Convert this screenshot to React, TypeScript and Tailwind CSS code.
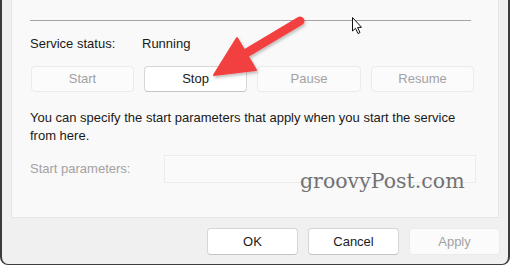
import React from "react";

const font = { fontFamily: '"Liberation Sans", Arial, sans-serif' };

const Btn = ({ label, disabled, w }: { label: string; disabled?: boolean; w: string }) => (
  <button
    className={
      disabled
        ? `${w} h-[26px] rounded-[4px] border border-[#ebebeb] bg-[#fbfbfb] text-[13px] text-[#a2a2a2]`
        : `${w} h-[26px] rounded-[4px] border border-[#d6d6d6] border-b-[#c4c4c4] bg-white text-[13px] text-[#1a1a1a]`
    }
  >
    {label}
  </button>
);

export default function App() {
  return (
    <div className="w-[510px] h-[267px] bg-white overflow-hidden relative" style={font}>
      <div className="h-[265px] bg-[#f0f0f0] border-l-2 border-r-2 border-b border-[#3c3c3c] rounded-b-[8px] flex flex-col px-[9px]">
        {/* tab page */}
        <div className="h-[218px] bg-[#f9f9f9] border-x border-b border-[#e6e6e6] pl-[18px] pr-[22px] flex flex-col">
          <div className="mt-[20px] mr-[5px] h-px bg-[#a3a3a3]" />
          <div className="mt-[15px] flex items-center h-[16px] text-[13px] text-[#1a1a1a]">
            <span className="w-[112px]">Service status:</span>
            <span>Running</span>
          </div>
          <div className="mt-[14px] flex gap-[10px] pl-[1px]">
            <Btn label="Start" disabled w="w-[103px]" />
            <Btn label="Stop" w="w-[103px]" />
            <Btn label="Pause" disabled w="w-[104px]" />
            <Btn label="Resume" disabled w="w-[103px]" />
          </div>
          <p className="mt-[17px] text-[13px] leading-[18px] text-[#1a1a1a]">
            You can specify the start parameters that apply when you start the service
            <br />
            from here.
          </p>
          <div className="mt-[10px] flex items-center">
            <span className="w-[134px] text-[13px] text-[#a2a2a2]">Start parameters:</span>
            <div className="w-[312px] h-[28px] border border-[#ececec] bg-[#fafafa]" />
          </div>
        </div>
        {/* bottom buttons */}
        <div className="mt-[10px] flex justify-end gap-[10px] mr-[-1px]">
          <Btn label="OK" w="w-[91px] h-[27px]" />
          <Btn label="Cancel" w="w-[91px] h-[27px]" />
          <Btn label="Apply" disabled w="w-[91px] h-[27px]" />
        </div>
      </div>

      {/* watermark */}
      <div
        className="absolute left-[300px] top-[171px] text-[20.5px] text-[#727272] leading-none"
        style={{ fontFamily: '"DejaVu Serif", "Liberation Serif", serif' }}
      >
        groovyPost.com
      </div>

      {/* red arrow */}
      <svg className="absolute left-0 top-0" width="510" height="267" viewBox="0 0 510 267">
        <defs>
          <filter id="sh" x="-20%" y="-20%" width="140%" height="140%">
            <feDropShadow dx="1" dy="2" stdDeviation="1.5" floodColor="#000" floodOpacity="0.25" />
          </filter>
        </defs>
        <g filter="url(#sh)" fill="#f2413f" stroke="#f2413f">
          <line x1="300" y1="21" x2="243" y2="55" strokeWidth="9" strokeLinecap="round" />
          <polygon points="237,38 214,75 256,70" strokeWidth="2" strokeLinejoin="round" />
        </g>
        {/* mouse cursor */}
        <path
          d="M352.5 17.5 L352.5 31 L355.5 28.3 L358 33.5 L360 32.6 L357.6 27.5 L361.5 27.3 Z"
          fill="#fff"
          stroke="#111"
          strokeWidth="1"
          strokeLinejoin="round"
        />
      </svg>
    </div>
  );
}
